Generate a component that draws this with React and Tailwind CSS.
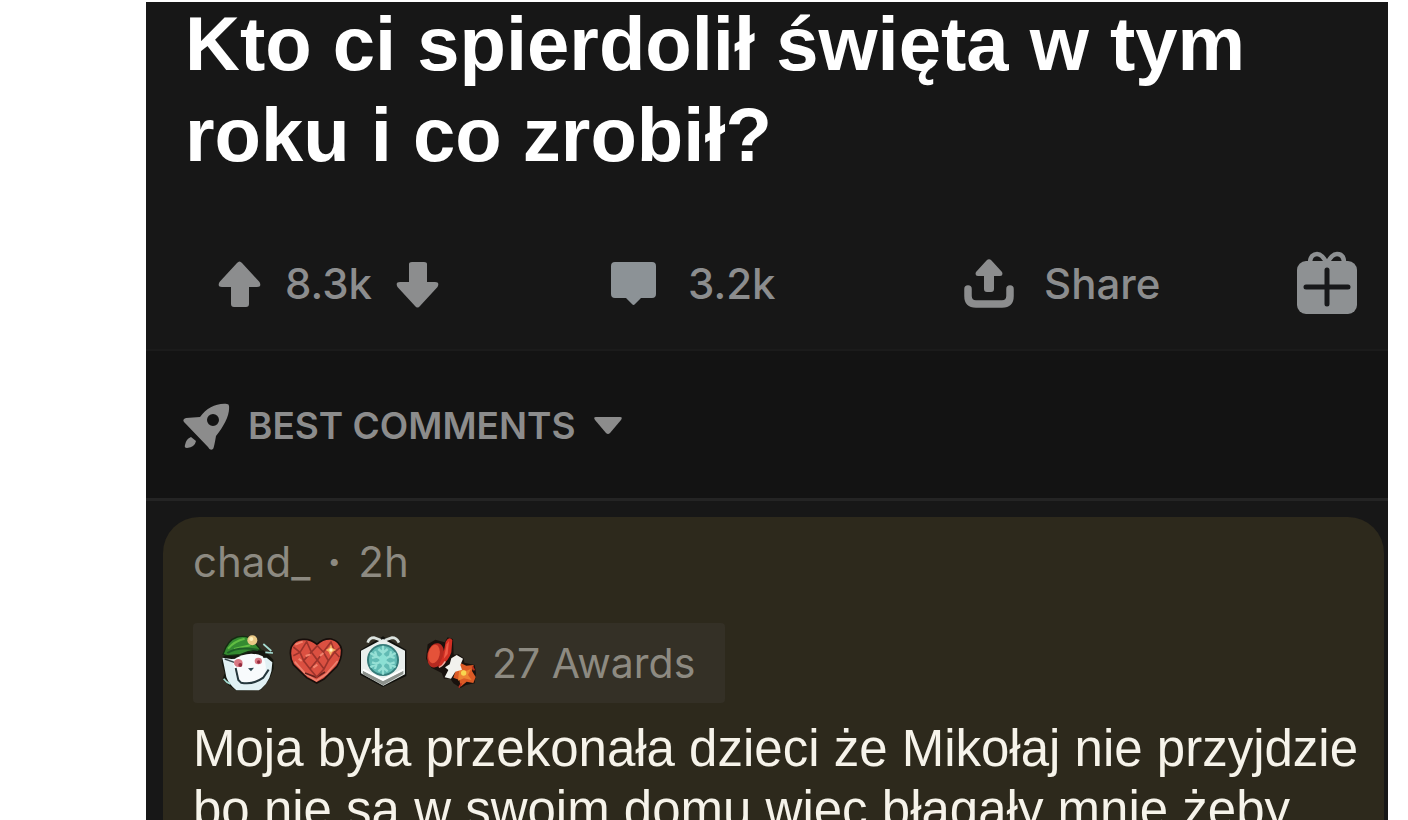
import React from "react";

const ArrowUp = () => (
  <svg viewBox="0 0 43 47" className="w-[43px] h-[47px]" fill="currentColor" aria-hidden="true">
    <path d="M19 2Q21.500 -1 24 2L41.500 21Q44 26 39 26H31V43Q31 46 28 46H16Q13 46 13 43V26H4Q-1 26 1.500 21Z" />
  </svg>
);

const ArrowDown = () => (
  <svg viewBox="0 0 43 47" className="w-[43px] h-[47px]" fill="currentColor" aria-hidden="true">
    <path d="M19 45Q21.500 48 24 45L41.500 26Q44 21 39 21H31V3Q31 1 28 1H16Q13 1 13 3V21H4Q-1 21 1.500 26Z" />
  </svg>
);

const CommentIcon = () => (
  <svg viewBox="0 0 45 47" className="w-[45px] h-[47px] text-[#8c9296]" fill="currentColor" aria-hidden="true">
    <path d="M4 1H41Q45 1 45 5V33Q45 37 41 37H30L24 43Q22.500 45 21 43L15 37H4Q0 37 0 33V5Q0 1 4 1Z" />
  </svg>
);

const ShareIcon = () => (
  <svg viewBox="0 0 50 50" className="w-[50px] h-[50px]" aria-hidden="true">
    <path d="M4 30V37Q4 45 12 45H38Q46 45 46 37V30" fill="none" stroke="currentColor" strokeWidth="7.500" strokeLinecap="round" />
    <path d="M22.500 1.500Q25 -1 27.500 1.500L38 13Q39.500 17 36 17H30V30Q30 33 27 33H23Q20 33 20 30V17H14Q10.500 17 12 13Z" fill="currentColor" />
  </svg>
);

const GiftIcon = () => (
  <svg viewBox="0 2 62 66" className="w-[62px] h-[66px] text-[#8e9193]" aria-hidden="true">
    <path d="M14 14C14 7 18 5 21 5C25 5 27 8 31 14C35 8 37 5 41 5C45 5 48 7 48 14" fill="none" stroke="currentColor" strokeWidth="4.500" />
    <rect x="1" y="12" width="60" height="53" rx="9" fill="currentColor" />
    <path d="M31 21V55M10 38H52" stroke="#17181a" strokeWidth="5" strokeLinecap="round" />
  </svg>
);

const RocketIcon = () => (
  <svg viewBox="0 0 48 48" className="w-12 h-12" fill="currentColor" aria-hidden="true">
    <path
      fillRule="evenodd"
      d="M45 2C34 1 25 6 18 15L4 16Q0 17 2 20L26 45Q28 49 31 47Q32 46 34 34C42 24 48 13 47 4Q47 2 45 2ZM31 12A6 6 0 1 0 31 24A6 6 0 1 0 31 12Z"
    />
    <path d="M9 35L14 39Q13 45 5 46Q2 46 3 43Q4 37 9 35Z" />
  </svg>
);

const ElfAward = () => (
  <svg viewBox="90 70 171 180" className="w-[57px] h-[60px]" aria-hidden="true">
    <path d="M97 142L115 134L220 122L235 134L250 150L251 177L239 207L214 240L140 243L118 228L98 208L104 190L95 160Z" fill="#15170f" />
    <path d="M97 144L124 148L230 144L247 158Q246 212 213 238L206 242H139Q117 224 109 203L103 172Z" fill="#e1f1f4" />
    <path d="M129 151Q175 120 218 140Q235 168 222 202Q185 225 148 214Q132 196 129 151Z" fill="#f8fbfc" />
    <path d="M137 175L145 211L153 219Q188 227 220 204L236 180" fill="none" stroke="#25373c" strokeWidth="6" />
    <path d="M101 207Q110 219 121 223M220 103L244 124M226 128L249 130" stroke="#a5dcd2" strokeWidth="5" fill="none" />
    <path d="M99 134Q112 91 142 82Q176 75 192 96L213 121Q180 120 151 135L111 138Z" fill="#358b31" stroke="#152c12" strokeWidth="4" />
    <path d="M114 117Q133 94 164 87M132 118L181 107" stroke="#61bd42" strokeWidth="6" fill="none" />
    <path d="M112 130Q145 108 204 121" stroke="#1f5d27" strokeWidth="6" fill="none" />
    <circle cx="187" cy="92" r="15" fill="#e9c886" />
    <circle cx="184" cy="88" r="6" fill="#fff0bb" />
    <path d="M104 148L133 158" stroke="#3c4b50" strokeWidth="4" />
    <ellipse cx="145" cy="160" rx="13" ry="12" fill="#d97983" />
    <ellipse cx="205" cy="154" rx="11" ry="10" fill="#d97983" />
    <circle cx="151" cy="166" r="6" fill="#942c3d" />
    <circle cx="206" cy="157" r="5" fill="#942c3d" />
    <path d="M174 176L192 174L183 185Z" fill="#2b4850" />
  </svg>
);

const HeartAward = () => (
  <svg viewBox="294 70 171 180" className="w-[57px] h-[60px]" aria-hidden="true">
    <path d="M380 220L350 204L310 165Q296 137 304 112Q315 88 341 89Q363 88 381 104Q399 86 424 88Q451 95 455 121Q455 150 440 171L402 208Z" fill="#db5041" stroke="#170e0b" strokeWidth="5" />
    <path d="M314 156L347 193L379 213L409 193L443 154" fill="none" stroke="#ed8270" strokeWidth="5" />
    <path d="M345 190L379 203L405 187" fill="none" stroke="#66211d" strokeWidth="5" />
    <path d="M310 112L330 128L350 96L364 127L382 108L400 127L423 97L434 127L450 114M310 138L330 128L341 153L364 127L382 151L400 127L415 153L434 127L448 142M341 153L360 178L382 151L402 178L415 153M360 178L380 202L402 178" fill="none" stroke="#9c332b" strokeWidth="5" />
    <path d="M316 105L338 96M347 139L361 134M390 139L400 130M370 174L382 165M326 147L335 154" stroke="#f3846e" strokeWidth="6" />
    <path d="M423 104L427 115L438 121L427 127L421 138L416 126L407 121L418 115Z" fill="#f5b260" />
    <circle cx="423" cy="121" r="5" fill="#fff0c4" />
  </svg>
);

const SnowflakeAward = () => (
  <svg viewBox="498 70 171 180" className="w-[57px] h-[60px]" aria-hidden="true">
    <path d="M579 80L649 121L649 199L579 232L510 195V122Z" fill="#11110d" />
    <path d="M533 99Q538 84 552 84L573 92M584 92L606 84Q620 84 627 99" fill="none" stroke="#dce3df" strokeWidth="8" />
    <path d="M579 88L645 123V194L580 228L513 191V123Z" fill="#e9efed" />
    <path d="M519 183L579 214L640 183V193L580 227L518 194Z" fill="#8c918c" />
    <path d="M519 180L579 211L640 180" fill="none" stroke="#fff" strokeWidth="6" />
    <circle cx="579" cy="151" r="48" fill="#347b79" />
    <circle cx="579" cy="151" r="42" fill="#62bbb4" />
    <path d="M579 108V195M541 130L617 173M541 173L617 130M565 118L579 130L593 118M565 185L579 173L593 185M546 145L560 141L555 125M603 177L600 163L614 158M546 158L560 163L555 178M603 125L600 140L614 145" fill="none" stroke="#96e0d5" strokeWidth="7" />
    <path d="M568 141L579 133L590 141V160L579 168L568 160Z" fill="#8be0d4" />
  </svg>
);

const RocketAward = () => (
  <svg viewBox="702 70 171 180" className="w-[57px] h-[60px]" aria-hidden="true">
    <path d="M713 104L736 90L764 98L773 83L789 88L791 135L805 134L821 146L823 159L854 166L858 190L854 221L828 226L812 235L790 221L781 207L762 207L755 190L724 174L708 147Z" fill="#18110d" />
    <ellipse cx="737" cy="137" rx="25" ry="37" transform="rotate(12 737 137)" fill="#b52a20" />
    <ellipse cx="732" cy="133" rx="17" ry="28" transform="rotate(12 732 133)" fill="#e55239" />
    <path d="M767 96Q778 78 787 91L784 128Q777 153 751 171L744 173L759 139Z" fill="#d12f23" />
    <path d="M770 104L777 94L773 133L761 148Z" fill="#ee5a45" />
    <path d="M747 173Q758 169 766 155" fill="none" stroke="#edada1" strokeWidth="4" />
    <path d="M805 157L829 168L851 166L846 184L857 202L850 220L830 216L812 231L808 211L790 204Z" fill="#db5a25" />
    <path d="M808 178L830 183L843 177L834 196L845 211L822 206L804 213Z" fill="#ee8433" />
    <path d="M784 146L800 136L819 147L811 166L816 180L796 186L783 207L764 203L775 181L765 173L779 164Z" fill="#f2f2ed" />
    <circle cx="821" cy="190" r="8" fill="#f8d64f" />
    <path d="M814 221L807 234M847 170L853 182" stroke="#b92d1d" strokeWidth="5" />
  </svg>
);

const PostActions = () => (
  <div className="grid grid-cols-[393fr_353fr_332fr_62px] items-center pl-[72px] pr-[30px] font-[Inter,sans-serif] text-[42px] leading-[48px] font-medium text-[#8c8d8e]">
    <div className="flex items-center gap-6">
      <button type="button" aria-label="Upvote">
        <ArrowUp />
      </button>
      <span>8.3k</span>
      <button type="button" aria-label="Downvote">
        <ArrowDown />
      </button>
    </div>
    <button type="button" className="flex items-center gap-8">
      <CommentIcon />
      3.2k
    </button>
    <button type="button" className="flex items-center gap-[30px]">
      <ShareIcon />
      Share
    </button>
    <button type="button" aria-label="Give award">
      <GiftIcon />
    </button>
  </div>
);

const Comment = () => (
  <article className="mt-4 ml-[17px] mr-1 rounded-t-[36px] bg-[#2d291c] pl-[30px] pr-3 pt-5 pb-8">
    <div className="flex gap-[17px] font-[Inter,sans-serif] text-[42px] leading-[50px] text-[#8d8a81]">
      <a href="#chad_">chad_</a>
      <span className="font-bold">·</span>
      <span>2h</span>
    </div>
    <button
      type="button"
      className="mt-9 flex items-center gap-[11px] rounded-sm bg-[#343026] py-[10px] pl-[27px] pr-[30px] font-[Inter,sans-serif] text-[41px] leading-[60px] text-[#8d8a81]"
    >
      <ElfAward />
      <HeartAward />
      <SnowflakeAward />
      <RocketAward />
      27 Awards
    </button>
    <p className="mt-[15px] font-['Liberation_Sans',sans-serif] text-[51px] leading-[61px] text-[#f6f3ea]">
      Moja była przekonała dzieci że Mikołaj nie przyjdzie bo nie są w swoim domu więc błagały mnie żeby
    </p>
  </article>
);

export default function App() {
  return (
    <div className="h-screen overflow-hidden bg-white pt-[2px] pl-[146px] pr-5">
      <main className="flow-root min-h-full bg-[#171717]">
        <section className="pb-8">
          <h1 className="-mt-1 pl-[39px] pr-24 font-['Liberation_Sans',sans-serif] text-[76px] leading-[91px] font-bold text-white">
            Kto ci spierdolił święta w tym roku i co zrobił?
          </h1>
          <div className="mt-[71px]">
            <PostActions />
          </div>
        </section>
        <section className="border-t-2 border-b-3 border-t-[#1b1b1b] border-b-[#242424] bg-[#131313] pt-[50px] pb-[47px] pl-9">
          <button
            type="button"
            className="flex items-center gap-[18px] font-[Inter,sans-serif] text-[37px] leading-[50px] font-semibold text-[#8c8c8c]"
          >
            <RocketIcon />
            BEST COMMENTS
            <svg viewBox="0 0 28 18" className="w-7 h-[18px]" fill="currentColor" aria-hidden="true">
              <path d="M2 0H26Q29 0 27 3L16 16Q14 18 12 16L1 3Q-1 0 2 0Z" />
            </svg>
          </button>
        </section>
        <Comment />
      </main>
    </div>
  );
}
